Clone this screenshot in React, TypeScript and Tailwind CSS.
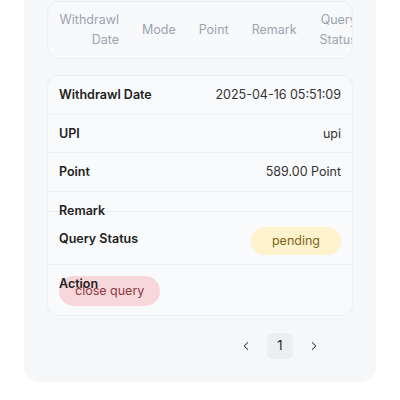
import React from "react";
import { ChevronLeft, ChevronRight } from "lucide-react";

export default function App() {
  const headers: string[][] = [["Withdrawl", "Date"], ["Mode"], ["Point"], ["Remark"], ["Query", "Status"]];
  return (
    <div className="min-h-[400px] w-[400px] bg-white" style={{ fontFamily: "Inter, 'Noto Sans', sans-serif" }}>
      <div className="mx-6 rounded-b-2xl bg-[#f6f7f9] px-[23px] pb-[23px] pt-px">
        <div className="overflow-hidden rounded-xl border border-[#eceef1] bg-[#f8f9fa]">
          <div className="flex w-max">
            {headers.map((h, i) => (
              <div key={i} className="flex flex-col items-end justify-center whitespace-nowrap px-[11.5px] py-[8px] text-right text-[12.5px] leading-5 text-[#9ca3af]">
                {h.map((l) => (
                  <span key={l}>{l}</span>
                ))}
              </div>
            ))}
          </div>
        </div>

        <div className="mt-4 overflow-hidden rounded-xl border border-[#eceef1] bg-[#f9fafb] text-[12.5px] leading-5">
          <div className="flex h-[39px] items-center justify-between border-b border-[#eff0f2] px-[11px]">
            <span className="font-semibold text-[#222]">Withdrawl Date</span>
            <span className="text-[#333]">2025-04-16 05:51:09</span>
          </div>
          <div className="flex h-[38px] items-center justify-between border-b border-[#eff0f2] px-[11px]">
            <span className="font-semibold text-[#222]">UPI</span>
            <span className="text-[#333]">upi</span>
          </div>
          <div className="flex h-[39px] items-center justify-between border-b border-[#eff0f2] px-[11px]">
            <span className="font-semibold text-[#222]">Point</span>
            <span className="text-[#333]">589.00 Point</span>
          </div>
          <div className="h-[20px] border-b border-[#eff0f2] px-[11px] pt-[9px]">
            <div className="font-semibold text-[#222]">Remark</div>
          </div>
          <div className="flex h-[53px] items-start justify-between border-b border-[#eff0f2] px-[11px] pt-[15px]">
            <span className="mt-[2px] font-semibold text-[#222]">Query Status</span>
            <span className="flex h-[28px] w-[90px] items-center justify-center rounded-full bg-[#fff3cd] text-[#7a6520]">pending</span>
          </div>
          <div className="h-[50px] px-[11px] pt-[9px]">
            <div className="relative z-10 font-semibold text-[#222]">Action</div>
            <button className="-mt-[18px] flex h-[30px] items-center whitespace-nowrap rounded-full bg-[#f8d7da] px-4 text-[12.5px] text-[#8a3b44]">close query</button>
          </div>
        </div>

        <div className="mt-[17px] flex items-center justify-end gap-2 pr-[26px]">
          <button className="flex h-[26px] w-[26px] items-center justify-center text-[#333]">
            <ChevronLeft size={14} strokeWidth={1.75} />
          </button>
          <button className="flex h-[26px] w-[26px] items-center justify-center rounded-md bg-[#eceef0] text-[13px] text-[#222]">1</button>
          <button className="flex h-[26px] w-[26px] items-center justify-center text-[#333]">
            <ChevronRight size={14} strokeWidth={1.75} />
          </button>
        </div>
      </div>
    </div>
  );
}
